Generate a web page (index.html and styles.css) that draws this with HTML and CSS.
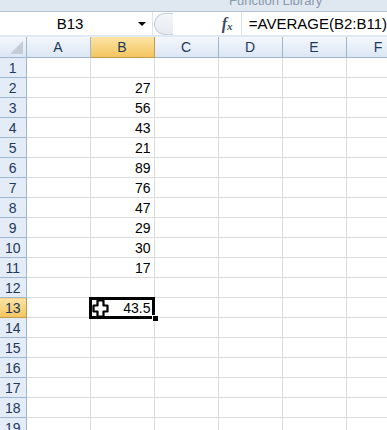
FILE: index.html
```html
<!DOCTYPE html>
<html lang="en">

<head>
    <meta charset="UTF-8">
    <meta name="viewport" content="width=device-width, initial-scale=1.0">
    <title>Average</title>
    <link rel="stylesheet" href="styles.css">
</head>

<body>
    <div class="ribbon">
        <span class="group-label">Function Library</span>
    </div>

    <div class="formula-bar">
        <div class="name-box">
            <span class="name">B13</span>
            <span class="arrow"></span>
        </div>
        <div class="splitter"><span class="knob"></span></div>
        <div class="fx"><i>f</i><i class="x">x</i></div>
        <div class="formula">=AVERAGE(B2:B11)</div>
    </div>

    <div class="sheet">
        <table class="grid">
            <colgroup>
                <col class="col-head">
                <col class="col"><col class="col"><col class="col">
                <col class="col"><col class="col"><col class="col">
            </colgroup>
            <thead>
                <tr>
                    <th class="corner"><span class="tri"></span></th>
                    <th>A</th><th class="on">B</th><th>C</th><th>D</th><th>E</th><th>F</th>
                </tr>
            </thead>
            <tbody>
                <tr><th>1</th><td></td><td></td><td></td><td></td><td></td><td></td></tr>
                <tr><th>2</th><td></td><td>27</td><td></td><td></td><td></td><td></td></tr>
                <tr><th>3</th><td></td><td>56</td><td></td><td></td><td></td><td></td></tr>
                <tr><th>4</th><td></td><td>43</td><td></td><td></td><td></td><td></td></tr>
                <tr><th>5</th><td></td><td>21</td><td></td><td></td><td></td><td></td></tr>
                <tr><th>6</th><td></td><td>89</td><td></td><td></td><td></td><td></td></tr>
                <tr><th>7</th><td></td><td>76</td><td></td><td></td><td></td><td></td></tr>
                <tr><th>8</th><td></td><td>47</td><td></td><td></td><td></td><td></td></tr>
                <tr><th>9</th><td></td><td>29</td><td></td><td></td><td></td><td></td></tr>
                <tr><th>10</th><td></td><td>30</td><td></td><td></td><td></td><td></td></tr>
                <tr><th>11</th><td></td><td>17</td><td></td><td></td><td></td><td></td></tr>
                <tr><th>12</th><td></td><td></td><td></td><td></td><td></td><td></td></tr>
                <tr>
                    <th class="on">13</th><td></td>
                    <td class="active">
                        <svg class="cursor" width="17" height="19" viewBox="0 0 17 19">
                            <path d="M5.5 1.5h6v5h4v6h-4v5h-6v-5h-4v-6h4z" fill="#fff" stroke="#000" stroke-width="2.2" stroke-linejoin="round"/>
                        </svg>43.5<span class="handle"></span>
                    </td>
                    <td></td><td></td><td></td><td></td>
                </tr>
                <tr><th>14</th><td></td><td></td><td></td><td></td><td></td><td></td></tr>
                <tr><th>15</th><td></td><td></td><td></td><td></td><td></td><td></td></tr>
                <tr><th>16</th><td></td><td></td><td></td><td></td><td></td><td></td></tr>
                <tr><th>17</th><td></td><td></td><td></td><td></td><td></td><td></td></tr>
                <tr><th>18</th><td></td><td></td><td></td><td></td><td></td><td></td></tr>
                <tr><th>19</th><td></td><td></td><td></td><td></td><td></td><td></td></tr>
            </tbody>
        </table>
    </div>
</body>

</html>
```

FILE: styles.css
```css
body {
    margin: 0;
    width: 387px;
    height: 430px;
    overflow: hidden;
    background: #fff;
    font-family: "Liberation Sans", Arial, sans-serif;
    font-size: 14px;
    color: #000;
}

/* top strip of the ribbon */
.ribbon {
    height: 11px;
    background: #dfe7f1;
    border-bottom: 1px solid #b6c3d3;
    position: relative;
    overflow: hidden;
}

.group-label {
    position: absolute;
    left: 229px;
    top: -7px;
    font-size: 13px;
    color: #8a98ab;
}

/* formula bar */
.formula-bar {
    display: flex;
    height: 23px;
    background: #fff;
    border-bottom: 2px solid #e3e9f2;
}

.name-box {
    width: 160px;
    display: flex;
    align-items: center;
    border-right: 1px solid #e0e4ea;
}

.name {
    flex: 1;
    text-align: center;
    padding-left: 2px;
    font-size: 15px;
}

.arrow {
    width: 0;
    height: 0;
    border-left: 4px solid transparent;
    border-right: 4px solid transparent;
    border-top: 4px solid #000;
    margin-right: 6px;
}

.splitter {
    width: 70px;
    display: flex;
    align-items: center;
    background: #fff;
}

.knob {
    width: 18px;
    height: 20px;
    margin-left: 1px;
    border: 1px solid #c9d2de;
    border-radius: 11px 0 0 11px;
    border-right: none;
    background: linear-gradient(#f4f6f9, #e6eaf0);
}

.fx {
    width: 20px;
    padding-left: 2px;
    display: flex;
    align-items: center;
    font-family: "Liberation Serif", serif;
    font-weight: bold;
    font-size: 16px;
    color: #384c63;
}

.fx .x {
    font-size: 11px;
    margin-top: 4px;
}

.formula {
    flex: 1;
    display: flex;
    align-items: center;
    padding-left: 7px;
    border-left: 1px solid #dde3eb;
    font-size: 15px;
    white-space: nowrap;
}

/* worksheet grid */
.sheet {
    overflow: hidden;
}

.grid {
    border-collapse: collapse;
    table-layout: fixed;
    width: 410px;
}

.col-head {
    width: 26px;
}

.col {
    width: 64px;
}

.grid th {
    font-weight: normal;
    font-size: 14px;
    color: #1e395b;
    padding: 0;
    border: 1px solid #9eb6ce;
    border-top: none;
    border-left: none;
}

.grid thead th {
    height: 20px;
    background: linear-gradient(#f4f7fc, #dce6f4);
    text-align: center;
}

.grid tbody th {
    height: 19px;
    background: #e4ecf7;
    text-align: center;
}

.grid th.on {
    background: linear-gradient(#fbe3a5, #f4c55f);
    border-color: #c29b4c;
}

.grid th.corner {
    position: relative;
}

.tri {
    position: absolute;
    right: 3px;
    bottom: 3px;
    width: 0;
    height: 0;
    border-left: 13px solid transparent;
    border-bottom: 13px solid #c3ccd7;
}

.grid td {
    padding: 0 3px 0 0;
    height: 19px;
    text-align: right;
    border-right: 1px solid #dadcdd;
    border-bottom: 1px solid #dadcdd;
    white-space: nowrap;
}

.grid td.active {
    position: relative;
    outline: 3px solid #000;
    outline-offset: -2px;
}

.cursor {
    position: absolute;
    left: 1px;
    top: 1px;
}

.handle {
    position: absolute;
    right: -5px;
    bottom: -5px;
    width: 5px;
    height: 5px;
    background: #000;
    border: 1px solid #fff;
}
```
